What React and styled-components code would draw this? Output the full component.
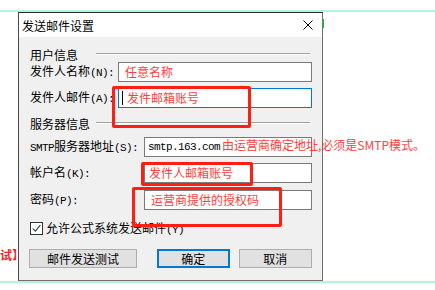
import styled, { createGlobalStyle } from 'styled-components';

const GlobalStyle = createGlobalStyle`
  html, body { margin: 0; padding: 0; background: #fff; }
  body { font-family: "Noto Sans CJK SC", sans-serif; font-size: 12px; color: #000; }
  * { box-sizing: border-box; }
`;

const Page = styled.div`
  position: relative;
  width: 435px;
  height: 290px;
  overflow: hidden;
  padding-top: 10px;
`;

const Rule = styled.div`
  height: 2px;
  background: #b5f4d7;
`;

const Stage = styled.div`
  display: flex;
  height: 269px;
`;

const Gutter = styled.div`
  width: 18px;
  overflow: hidden;
  padding-top: 236px;
`;

const SideNote = styled.div`
  white-space: nowrap;
  color: #f02424;
  font-weight: bold;
  font-size: 12px;
  line-height: 14px;
`;

const Dialog = styled.div`
  width: 305px;
  display: flex;
  flex-direction: column;
  border: 1px solid #6e6e6e;
  border-top-color: #2a2a2a;
  border-left-color: #4a4a4a;
  background: #f0f0f0;
`;

const TitleBar = styled.div`
  height: 24px;
  background: #fff;
  display: flex;
  align-items: center;
  justify-content: space-between;
  padding: 0 9px 0 3px;
  font-size: 12px;
`;

const Body = styled.div`
  flex: 1;
  display: flex;
  flex-direction: column;
  padding: 10px 10px 0 11px;
`;

const Group = styled.div`
  display: grid;
  grid-template-columns: 66px 1fr;
  align-items: center;
  height: 15px;
  margin-top: ${p => p.$top || 0}px;
  margin-right: 2px;
  line-height: 15px;
`;

const Etch = styled.div`
  height: 2px;
  border-top: 1px solid #a0a0a0;
  border-bottom: 1px solid #fff;
  margin-top: -2px;
`;

const Row = styled.div`
  display: grid;
  grid-template-columns: ${p => p.$label}px 1fr;
  align-items: center;
  height: 20px;
  margin-top: ${p => p.$top || 0}px;
`;

const Label = styled.span`
  white-space: nowrap;
  line-height: 14px;
`;

const Half = styled.span`
  font-family: "Liberation Mono", monospace;
  font-size: 11px;
  letter-spacing: -0.6px;
`;

const Field = styled.div`
  height: 20px;
  display: flex;
  align-items: center;
  background: #fff;
  border: 1px solid ${p => (p.$focus ? '#0078d7' : '#7a7a7a')};
  padding-left: ${p => p.$pad}px;
  white-space: nowrap;
  overflow: hidden;
`;

const Hint = styled.span`
  color: #ff3d3d;
  font-size: 12px;
  line-height: 16px;
`;

const Caret = styled.span`
  width: 1px;
  height: 14px;
  background: #000;
  margin-right: 4px;
`;

const Mono = styled.span`
  font-family: "Liberation Mono", monospace;
  font-size: 11px;
  letter-spacing: -0.6px;
`;

const CheckRow = styled.div`
  display: flex;
  align-items: center;
  gap: 3px;
  height: 13px;
  margin-top: 12px;
`;

const Box = styled.span`
  width: 13px;
  height: 13px;
  border: 1px solid #333;
  background: #fff;
  display: flex;
  align-items: center;
  justify-content: center;
`;

const Buttons = styled.div`
  display: flex;
  margin-top: 14px;
`;

const Button = styled.div`
  width: ${p => p.$w}px;
  height: 19px;
  margin-left: ${p => p.$gap}px;
  display: flex;
  align-items: center;
  justify-content: center;
  background: #e1e1e1;
  border: ${p => (p.$default ? '2px solid #0078d7' : '1px solid #adadad')};
  font-size: 12px;
`;

const Mark = styled.div`
  position: absolute;
  left: ${p => p.$x}px;
  top: ${p => p.$y}px;
  width: ${p => p.$w}px;
  height: ${p => p.$h}px;
  border: 3px solid #ff1e12;
  border-radius: 2px;
`;

const Callout = styled.div`
  position: absolute;
  left: 222px;
  top: 137px;
  line-height: 16px;
  color: #ff3d3d;
  font-size: 12px;
  white-space: nowrap;
`;

const EdgeTick = styled.div`
  position: absolute;
  left: 322px;
  top: 19px;
  width: 2px;
  height: 9px;
  background: #3aa54a;
`;

function CloseIcon() {
  return (
    <svg width="10" height="10" viewBox="0 0 10 10">
      <path d="M0.5 0.5 L9.5 9.5 M9.5 0.5 L0.5 9.5" stroke="#000" strokeWidth="1" />
    </svg>
  );
}

function CheckIcon() {
  return (
    <svg width="9" height="9" viewBox="0 0 9 9">
      <path d="M0.8 4.6 L3.4 7.2 L8.3 1.2" fill="none" stroke="#444" strokeWidth="1.2" />
    </svg>
  );
}

export default function App() {
  return (
    <Page>
      <GlobalStyle />
      <Rule />
      <Stage>
        <Gutter>
          <SideNote>试】</SideNote>
        </Gutter>
        <Dialog>
          <TitleBar>
            <span>发送邮件设置</span>
            <CloseIcon />
          </TitleBar>
          <Body>
            <Group>
              <Label>用户信息</Label>
              <Etch />
            </Group>
            <Row $label={88}>
              <Label>发件人名称<Half>(N):</Half></Label>
              <Field $pad={6}><Hint>任意名称</Hint></Field>
            </Row>
            <Row $label={88} $top={6}>
              <Label>发件人邮件<Half>(A):</Half></Label>
              <Field $pad={3} $focus><Caret /><Hint>发件邮箱账号</Hint></Field>
            </Row>
            <Group $top={8}>
              <Label>服务器信息</Label>
              <Etch />
            </Group>
            <Row $label={114} $top={6}>
              <Label><Half>SMTP</Half>服务器地址<Half>(S):</Half></Label>
              <Field $pad={3}><Mono>smtp.163.com</Mono></Field>
            </Row>
            <Row $label={114} $top={6}>
              <Label>帐户名<Half>(K):</Half></Label>
              <Field $pad={4}><Hint>发件人邮箱账号</Hint></Field>
            </Row>
            <Row $label={114} $top={7}>
              <Label>密码<Half>(P):</Half></Label>
              <Field $pad={6}><Hint>运营商提供的授权码</Hint></Field>
            </Row>
            <CheckRow>
              <Box><CheckIcon /></Box>
              <Label>允许公式系统发送邮件<Half>(Y)</Half></Label>
            </CheckRow>
            <Buttons>
              <Button $w={109} $gap={-1}>邮件发送测试</Button>
              <Button $w={73} $gap={20} $default>确定</Button>
              <Button $w={74} $gap={9}>取消</Button>
            </Buttons>
          </Body>
        </Dialog>
      </Stage>
      <Rule />
      <EdgeTick />
      <Mark $x={112} $y={86} $w={139} $h={42} />
      <Mark $x={141} $y={162} $w={112} $h={24} />
      <Mark $x={132} $y={187} $w={150} $h={40} />
      <Callout>由运营商确定地址,必须是SMTP模式。</Callout>
    </Page>
  );
}
